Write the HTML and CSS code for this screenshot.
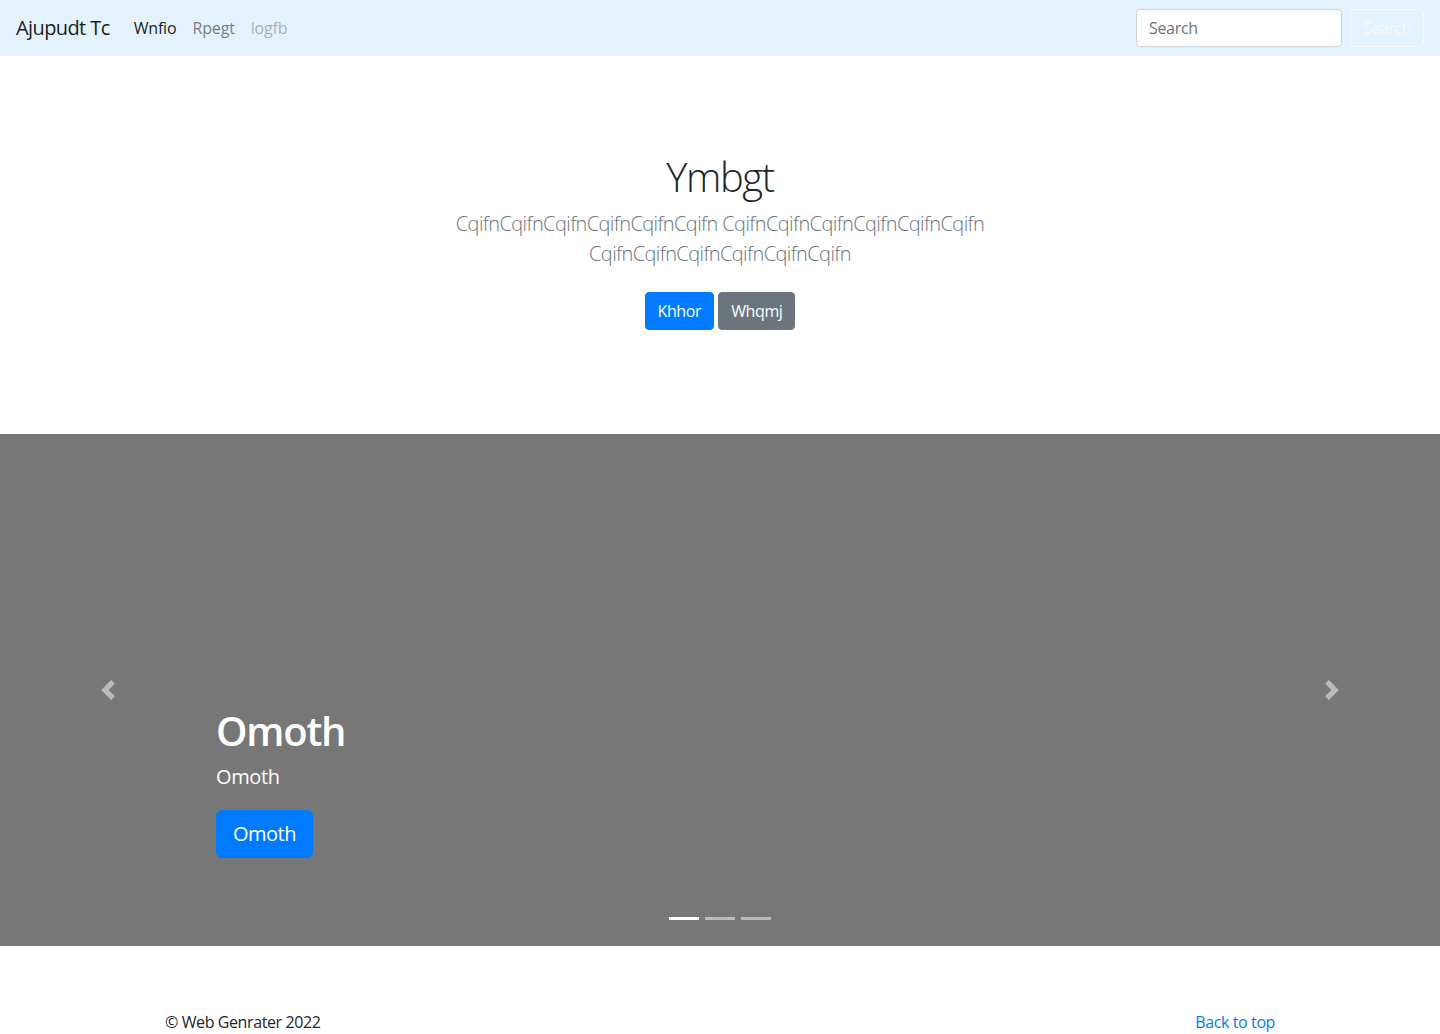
FILE: index.html
```html
<!DOCTYPE html>
<html lang="en">
<head>
<meta charset="utf-8">
<title>Ajupudt Tc</title>
<link rel="stylesheet" href="styles.css">
</head>
<body>
<header class="navbar">
  <div class="nav-left">
    <a class="brand" href="#">Ajupudt Tc</a>
    <ul class="nav">
      <li><a class="nav-link active" href="#">Wnfio</a></li>
      <li><a class="nav-link" href="#">Rpegt</a></li>
      <li><a class="nav-link disabled" href="#">logfb</a></li>
    </ul>
  </div>
  <form class="search">
    <input class="search-input" type="text" placeholder="Search">
    <button class="btn btn-search" type="button">Search</button>
  </form>
</header>

<main>
  <section class="hero">
    <div class="hero-inner">
      <h1 class="hero-title">Ymbgt</h1>
      <p class="lead">CqifnCqifnCqifnCqifnCqifnCqifn CqifnCqifnCqifnCqifnCqifnCqifn CqifnCqifnCqifnCqifnCqifnCqifn</p>
      <p class="hero-actions">
        <a href="#" class="btn btn-primary">Khhor</a>
        <a href="#" class="btn btn-secondary">Whqmj</a>
      </p>
    </div>
  </section>

  <section class="carousel">
    <div class="slide">
      <div class="caption">
        <h2 class="caption-title">Omoth</h2>
        <p class="caption-text">Omoth</p>
        <p class="caption-action"><a href="#" class="btn btn-lg btn-primary">Omoth</a></p>
      </div>
    </div>
    <a class="control control-prev" href="#" aria-label="Previous">
      <svg class="control-icon" viewBox="0 0 8 8" width="20" height="20"><path fill="#fff" d="M5.25 0l-4 4 4 4 1.5-1.5-2.5-2.5 2.5-2.5-1.5-1.5z"/></svg>
    </a>
    <a class="control control-next" href="#" aria-label="Next">
      <svg class="control-icon" viewBox="0 0 8 8" width="20" height="20"><path fill="#fff" d="M2.75 0l-1.5 1.5 2.5 2.5-2.5 2.5 1.5 1.5 4-4-4-4z"/></svg>
    </a>
    <ol class="indicators">
      <li class="active"></li>
      <li></li>
      <li></li>
    </ol>
  </section>
</main>

<footer class="footer">
  <p class="footer-copy">&copy; Web Genrater 2022</p>
  <p class="footer-top"><a href="#">Back to top</a></p>
</footer>
</body>
</html>
```

FILE: styles.css
```css
*, *::before, *::after { box-sizing: border-box; }

body {
  margin: 0;
  font-family: "Open Sans", "Noto Sans", "Liberation Sans", sans-serif;
  font-size: 16px;
  line-height: 1.5;
  color: #212529;
  background: #fff;
}

a { text-decoration: none; }

/* navbar */
.navbar {
  height: 56px;
  padding: 8px 16px;
  background: #e3f2fd;
  display: flex;
  align-items: center;
  justify-content: space-between;
}
.nav-left { display: flex; align-items: center; }
.brand {
  font-size: 20px;
  line-height: 30px;
  padding: 5px 0;
  margin-right: 16px;
  letter-spacing: -0.03em;
  color: rgba(0,0,0,.9);
}
.nav { display: flex; list-style: none; margin: 0; padding: 0; }
.nav-link {
  display: block;
  padding: 8px;
  letter-spacing: -0.01em;
  color: rgba(0,0,0,.5);
}
.nav-link.active { color: rgba(0,0,0,.9); }
.nav-link.disabled { color: rgba(0,0,0,.3); }

.search { display: flex; align-items: center; margin: 0; }
.search-input {
  width: 206px;
  height: 38px;
  padding: 6px 12px;
  margin-right: 8px;
  font-family: inherit;
  font-size: 16px;
  letter-spacing: -0.02em;
  color: #495057;
  background: #fff;
  border: 1px solid #ced4da;
  border-radius: 4px;
}
.search-input::placeholder { color: #6c757d; opacity: 1; }

/* buttons */
.btn {
  display: inline-block;
  font-family: inherit;
  font-size: 16px;
  line-height: 1.5;
  padding: 6px 12px;
  border: 1px solid transparent;
  border-radius: 4px;
  letter-spacing: -0.025em;
  color: #fff;
  vertical-align: middle;
  text-align: center;
}
.btn-primary { background: #007bff; border-color: #007bff; }
.btn-secondary { background: #6c757d; border-color: #6c757d; }
.btn-search {
  width: 74px;
  background: transparent;
  color: #f8f9fa;
  border-color: #f8f9fa;
}
.btn-lg {
  font-size: 20px;
  line-height: 1.5;
  padding: 8px 16px;
  border-radius: 6px;
}

/* hero */
.hero {
  padding: 96px 15px;
  text-align: center;
}
.hero-inner { max-width: 640px; margin: 0 auto; padding: 0 15px; }
.hero-title {
  margin: 0 0 8px;
  padding-top: 2px;
  font-size: 40px;
  font-weight: 300;
  line-height: 46px;
  letter-spacing: -0.035em;
  color: #212529;
}
.lead {
  margin: 0 0 16px;
  padding-top: 1px;
  font-size: 20px;
  font-weight: 300;
  line-height: 30px;
  letter-spacing: -0.03em;
  color: #6c757d;
}
.hero-actions { margin: -1px 0 0; }
.hero-actions .btn { margin: 8px 0; }

/* carousel */
.carousel {
  position: relative;
  height: 512px;
  margin-bottom: 64px;
  background: #777;
}
.slide { height: 100%; }
.caption {
  position: absolute;
  left: 15%;
  right: 15%;
  bottom: 48px;
  padding: 20px 0;
  color: #fff;
  text-align: left;
  z-index: 10;
}
.caption-title {
  margin: 0 0 8px;
  padding-top: 2px;
  font-size: 40px;
  font-weight: 600;
  line-height: 46px;
  letter-spacing: -0.03em;
}
.caption-text {
  margin: 0 0 20px;
  padding-top: 1px;
  font-size: 20px;
  line-height: 27px;
  letter-spacing: -0.02em;
}
.caption-action { margin: 0 0 20px; line-height: 1; }

.control {
  position: absolute;
  top: 0;
  bottom: 0;
  width: 15%;
  display: flex;
  align-items: center;
  justify-content: center;
  opacity: .5;
}
.control-prev { left: 0; }
.control-next { right: 0; }
.control-icon { display: block; }

.indicators {
  position: absolute;
  left: 0;
  right: 0;
  bottom: 0;
  margin: 0 15% 16px;
  padding: 0;
  list-style: none;
  display: flex;
  justify-content: center;
}
.indicators li {
  width: 30px;
  height: 3px;
  margin: 10px 3px;
  background: #fff;
  opacity: .5;
}
.indicators li.active { opacity: 1; }

/* footer */
.footer {
  max-width: 1140px;
  margin: 0 auto;
  padding: 0 15px;
  display: flex;
  justify-content: space-between;
  letter-spacing: -0.025em;
}
.footer p { margin: 0 0 16px; }
.footer a { color: #007bff; }
```
